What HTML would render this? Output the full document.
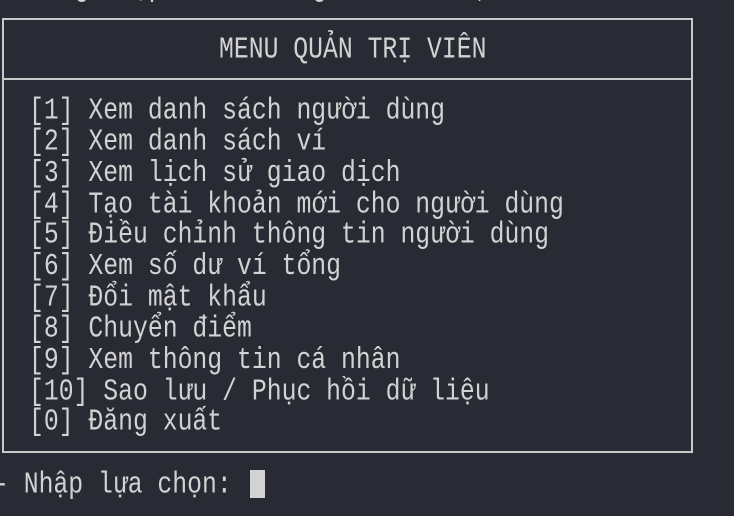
<!DOCTYPE html>
<html><head><meta charset="utf-8"><style>
html,body{margin:0;padding:0;width:734px;height:516px;background:#282b33;overflow:hidden}
.t{position:absolute;left:0;white-space:pre;font-family:"Liberation Mono","DejaVu Sans Mono",monospace;font-size:27px;color:#d2d2d2;transform:scale(0.917,1.12);transform-origin:0 0;line-height:27.85px}
.box{position:absolute;left:2px;top:18px;width:687px;height:431px;border:2px solid #c8c8c8}
.div{position:absolute;left:2px;top:78px;width:691px;height:2px;background:#c8c8c8}
.cur{position:absolute;left:250px;top:470px;width:15px;height:28px;background:#d2d2d2}
</style></head><body>
<div class="t" style="top:-26px;left:0">  Đăng nhập thành công! Xin chào, admin</div>
<div class="box"></div>
<div class="div"></div>
<div class="t" style="top:36px;left:219px">MENU QUẢN TRỊ VIÊN</div>
<div class="t" style="top:97px;left:29px">[1] Xem danh sách người dùng
[2] Xem danh sách ví
[3] Xem lịch sử giao dịch
[4] Tạo tài khoản mới cho người dùng
[5] Điều chỉnh thông tin người dùng
[6] Xem số dư ví tổng
[7] Đổi mật khẩu
[8] Chuyển điểm
[9] Xem thông tin cá nhân
[10] Sao lưu / Phục hồi dữ liệu
[0] Đăng xuất</div>
<div class="t" style="top:471px;left:-6px">- Nhập lựa chọn: </div>
<div class="cur"></div>
</body></html>
